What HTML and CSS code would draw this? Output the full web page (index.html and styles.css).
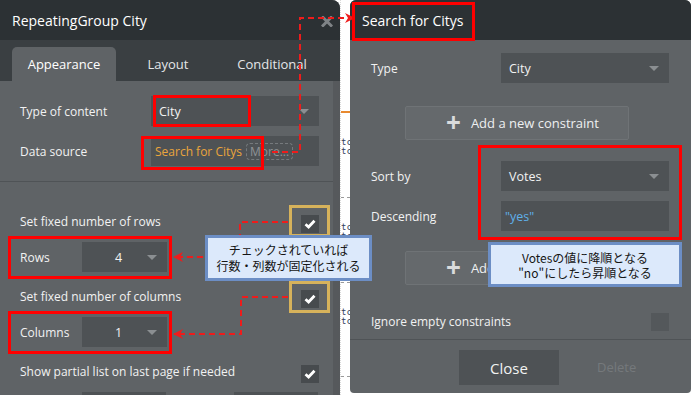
FILE: index.html
```html
<!DOCTYPE html>
<html lang="ja">
<head>
  <meta charset="UTF-8" />
  <meta name="viewport" content="width=device-width, initial-scale=1.0" />
  <title>RepeatingGroup City</title>
  <link rel="stylesheet" href="styles.css">
</head>
<body>
  <div class="page">

    <!-- element property editor -->
    <section class="panel panel-left">
      <header class="panel-head">
        <h1>RepeatingGroup City</h1>
        <svg class="close-x" width="12" height="11" viewBox="0 0 12 11">
          <path d="M2 1.5 L10 9.5 M10 1.5 L2 9.5" stroke="#7f8386" stroke-width="3" stroke-linecap="square" />
        </svg>
      </header>
      <nav class="tabs">
        <span class="tab active">Appearance</span>
        <span class="tab">Layout</span>
        <span class="tab">Conditional</span>
      </nav>
      <div class="panel-body">
        <div class="group">
          <div class="row">
            <label>Type of content</label>
            <div class="field select"><span>City</span><i class="caret"></i></div>
          </div>
          <div class="row">
            <label>Data source</label>
            <div class="field source"><span class="src">Search for Citys</span><span class="more">More...</span></div>
          </div>
        </div>
        <div class="group checks">
          <div class="check-row">
            <span>Set fixed number of rows</span>
            <span class="check"><svg width="12" height="10" viewBox="0 0 12 10"><path d="M1.5 5.2 L4.6 8 L10.5 1.8" fill="none" stroke="#fff" stroke-width="2.8" /></svg></span>
          </div>
          <div class="row short">
            <label>Rows</label>
            <div class="field num"><span>4</span><i class="caret"></i></div>
          </div>
          <div class="check-row">
            <span>Set fixed number of columns</span>
            <span class="check"><svg width="12" height="10" viewBox="0 0 12 10"><path d="M1.5 5.2 L4.6 8 L10.5 1.8" fill="none" stroke="#fff" stroke-width="2.8" /></svg></span>
          </div>
          <div class="row short">
            <label>Columns</label>
            <div class="field num"><span>1</span><i class="caret"></i></div>
          </div>
          <div class="check-row">
            <span>Show partial list on last page if needed</span>
            <span class="check"><svg width="12" height="10" viewBox="0 0 12 10"><path d="M1.5 5.2 L4.6 8 L10.5 1.8" fill="none" stroke="#fff" stroke-width="2.8" /></svg></span>
          </div>
          <div class="row tail">
            <div class="field stub"></div>
            <div class="field stub"></div>
          </div>
        </div>
      </div>
    </section>

    <!-- editor canvas peeking through -->
    <div class="canvas-strip">
      <div class="orange-line"></div>
      <div class="code">tc<br>tc</div>
      <div class="dash"></div>
      <div class="code">tc<br>tc</div>
      <div class="dash"></div>
      <div class="code">tc<br>tc</div>
      <div class="dash last"></div>
    </div>

    <!-- data source popup -->
    <section class="panel panel-right">
      <header class="panel-head">
        <h2>Search for Citys</h2>
      </header>
      <div class="panel-body">
        <div class="row">
          <label>Type</label>
          <div class="field select"><span>City</span><i class="caret"></i></div>
        </div>
        <button class="add-btn"><span class="plus">+</span>Add a new constraint</button>
        <div class="row sort">
          <label>Sort by</label>
          <div class="field select"><span>Votes</span><i class="caret"></i></div>
        </div>
        <div class="row">
          <label>Descending</label>
          <div class="field"><span class="dyn">"yes"</span></div>
        </div>
        <button class="add-btn second"><span class="plus">+</span>Add</button>
        <div class="check-row ignore">
          <span>Ignore empty constraints</span>
          <span class="check"></span>
        </div>
      </div>
      <footer class="panel-foot">
        <button class="close-btn">Close</button>
        <span class="delete">Delete</span>
      </footer>
    </section>

    <!-- annotations -->
    <svg class="arrows" width="691" height="395" viewBox="0 0 691 395">
      <defs>
        <marker id="head" markerWidth="10" markerHeight="10" refX="9" refY="5" orient="auto" markerUnits="userSpaceOnUse">
          <path d="M0 0 L10 5 L0 10 L3 5 Z" fill="#ee1c1c" />
        </marker>
      </defs>
      <path d="M272 152 H300 V18 H354" fill="none" stroke="#ee1c1c" stroke-width="2" stroke-dasharray="6 4" marker-end="url(#head)" />
      <path d="M288 222 H240 V257 H174" fill="none" stroke="#ee1c1c" stroke-width="2" stroke-dasharray="6 4" marker-end="url(#head)" />
      <path d="M288 297 H241 V334 H174" fill="none" stroke="#ee1c1c" stroke-width="2" stroke-dasharray="6 4" marker-end="url(#head)" />
    </svg>

    <div class="mark red m-type"></div>
    <div class="mark red m-source"></div>
    <div class="mark red m-rows"></div>
    <div class="mark red m-cols"></div>
    <div class="mark red m-title"></div>
    <div class="mark red m-sort"></div>
    <div class="mark gold m-check1"></div>
    <div class="mark gold m-check2"></div>

    <div class="note note-fixed">チェックされていれば<br>行数・列数が固定化される</div>
    <div class="note note-sort">Votesの値に降順となる<br>"no"にしたら昇順となる</div>
  </div>
</body>
</html>
```

FILE: styles.css
```css
:root {
  --head-bg: #2c3134;
  --tab-bg: #3a3f42;
  --body-bg: #5f6366;
  --field-bg: #4e5255;
  --line: #4f5356;
  --text: #f2f2f2;
  --mark-red: #ff0000;
  --mark-gold: #d6b25b;
}

* {
  box-sizing: border-box;
}

body {
  margin: 0;
  background: #fff;
  font-family: 'Open Sans', 'Noto Sans CJK JP', sans-serif;
  color: var(--text);
}

.page {
  position: relative;
  width: 691px;
  height: 395px;
  overflow: hidden;
  display: flex;
}

.panel {
  display: flex;
  flex-direction: column;
  background: var(--body-bg);
  overflow: hidden;
}

.panel-left {
  width: 340px;
  height: 395px;
  border-top-right-radius: 8px;
}

.panel-right {
  width: 341px;
  height: 393px;
  border-radius: 6px 6px 4px 4px;
}

.panel-head {
  height: 40px;
  flex: none;
  background: var(--head-bg);
  display: flex;
  align-items: center;
  justify-content: space-between;
  padding: 0 7px 0 12px;
}

.panel-head h1, .panel-head h2 {
  margin: 0;
  font-size: 14px;
  font-weight: normal;
  color: #fff;
}

.close-x { margin-top: 2px; }

.tabs {
  height: 41px;
  flex: none;
  background: var(--tab-bg);
  display: flex;
  align-items: flex-end;
  padding-left: 12px;
}

.tab {
  width: 104px;
  height: 34px;
  line-height: 34px;
  text-align: center;
  font-size: 13px;
  color: #e4e6e8;
  border-radius: 5px 5px 0 0;
}

.tab.active {
  background: var(--body-bg);
  color: #fff;
}

.panel-left .panel-body {
  flex: 1;
  min-height: 0;
  border-right: 7px solid #56595c;
}

.group {
  padding: 15px 14px 15px 20px;
}

.group.checks {
  border-top: 1px solid var(--line);
  padding-top: 26px;
}

.row {
  display: flex;
  align-items: center;
  height: 30px;
  flex: none;
  margin-bottom: 10px;
  font-size: 12px;
}

.row label {
  width: 131px;
  flex: none;
}

.row:last-child { margin-bottom: 0; }

.field {
  width: 168px;
  height: 30px;
  flex: none;
  background: var(--field-bg);
  display: flex;
  align-items: center;
  padding: 0 8px;
  font-size: 12.5px;
  position: relative;
}

.caret {
  position: absolute;
  right: 10px;
  top: 13px;
  border-left: 5px solid transparent;
  border-right: 5px solid transparent;
  border-top: 5px solid #8b8f92;
}

.field.source {
  padding-left: 4px;
  gap: 4px;
  white-space: nowrap;
}

.src { color: #eaa53c; font-size: 12px; }

.more {
  color: #8e9295;
  font-size: 12px;
  border: 1px dashed #767a7d;
  border-radius: 4px;
  padding: 0 3px;
  line-height: 15px;
}

.check-row {
  display: flex;
  align-items: center;
  justify-content: space-between;
  height: 30px;
  margin-bottom: 4px;
  font-size: 12px;
}

.check-row > span:first-child { padding-bottom: 3px; }

.check {
  width: 18px;
  height: 18px;
  margin-top: 2px;
  background: #474b4e;
  display: flex;
  align-items: center;
  justify-content: center;
}

.row.short {
  margin-bottom: 11px;
}

.row.short label { width: 62px; }

.field.num {
  width: 85px;
  justify-content: center;
  padding-right: 20px;
}

.row.tail {
  gap: 68px;
  padding-left: 62px;
}

.field.stub { width: 84px; }

.canvas-strip {
  width: 10px;
  flex: none;
  background: #fff;
  border-left: 1px dotted #d8d8d8;
  font-family: 'DejaVu Sans Mono', monospace;
  font-size: 9px;
  color: #33405a;
  line-height: 9px;
}

.orange-line {
  height: 2px;
  background: #e8892f;
  margin-top: 111px;
}

.code { margin-top: 25px; }

.dash {
  border-top: 1px dashed #9a9a9a;
  margin-top: 41px;
}

.dash.last { margin-top: 50px; }

.panel-right .panel-body {
  flex: 1;
  padding: 13px 22px 0 21px;
}

.panel-right .row label { width: 130px; }

.add-btn {
  display: flex;
  align-items: center;
  width: 224px;
  height: 34px;
  margin: 23px 0 21px 34px;
  padding: 0 0 0 40px;
  background: #65696c;
  border: 1px solid #6f7376;
  border-radius: 2px;
  color: #eef0f1;
  font-family: inherit;
  font-size: 13px;
}

.add-btn.second { margin: 20px 0 0 34px; }

.plus {
  font-size: 26px;
  font-weight: bold;
  color: #d9dbdc;
  margin-right: 10px;
  line-height: 20px;
  margin-top: -3px;
}

.dyn { color: #5fb0ea; margin-left: -4px; }

.check-row.ignore {
  margin-top: 22px;
  margin-bottom: 0;
}

.check-row.ignore > span:first-child { padding-bottom: 1px; }

.ignore .check { background: #54585b; margin-top: 0; }

.panel-foot {
  border-top: 1px solid var(--line);
  margin-top: 2px;
  height: 54px;
  flex: none;
  display: flex;
  align-items: flex-start;
  padding: 10px 0 0 109px;
}

.close-btn {
  width: 100px;
  height: 35px;
  background: var(--field-bg);
  border: none;
  color: #f2f2f2;
  font-family: inherit;
  font-size: 15px;
}

.delete {
  margin: 8px 0 0 38px;
  font-size: 13px;
  color: #75797c;
}

/* annotations */
.arrows {
  position: absolute;
  left: 0;
  top: 0;
  pointer-events: none;
}

.mark {
  position: absolute;
  border: 3px solid var(--mark-red);
}

.mark.gold { border-color: var(--mark-gold); }

.m-type { left: 153px; top: 95px; width: 98px; height: 32px; }
.m-source { left: 141px; top: 136px; width: 123px; height: 34px; }
.m-rows { left: 8px; top: 236px; width: 164px; height: 43px; }
.m-cols { left: 8px; top: 311px; width: 164px; height: 43px; }
.m-title { left: 352px; top: 2px; width: 123px; height: 39px; }
.m-sort { left: 478px; top: 145px; width: 204px; height: 95px; }
.m-check1 { left: 289px; top: 205px; width: 41px; height: 32px; }
.m-check2 { left: 289px; top: 281px; width: 41px; height: 32px; }

.note {
  position: absolute;
  background: #dce9fb;
  border: 3px solid #6c8ec5;
  color: #151515;
  text-align: center;
  font-family: 'Noto Sans CJK JP', sans-serif;
  font-size: 12px;
  line-height: 15px;
  display: flex;
  align-items: center;
  justify-content: center;
}

.note-fixed { left: 205px; top: 235px; width: 167px; height: 46px; line-height: 16px; }
.note-sort { left: 488px; top: 242px; width: 194px; height: 45px; }
```
